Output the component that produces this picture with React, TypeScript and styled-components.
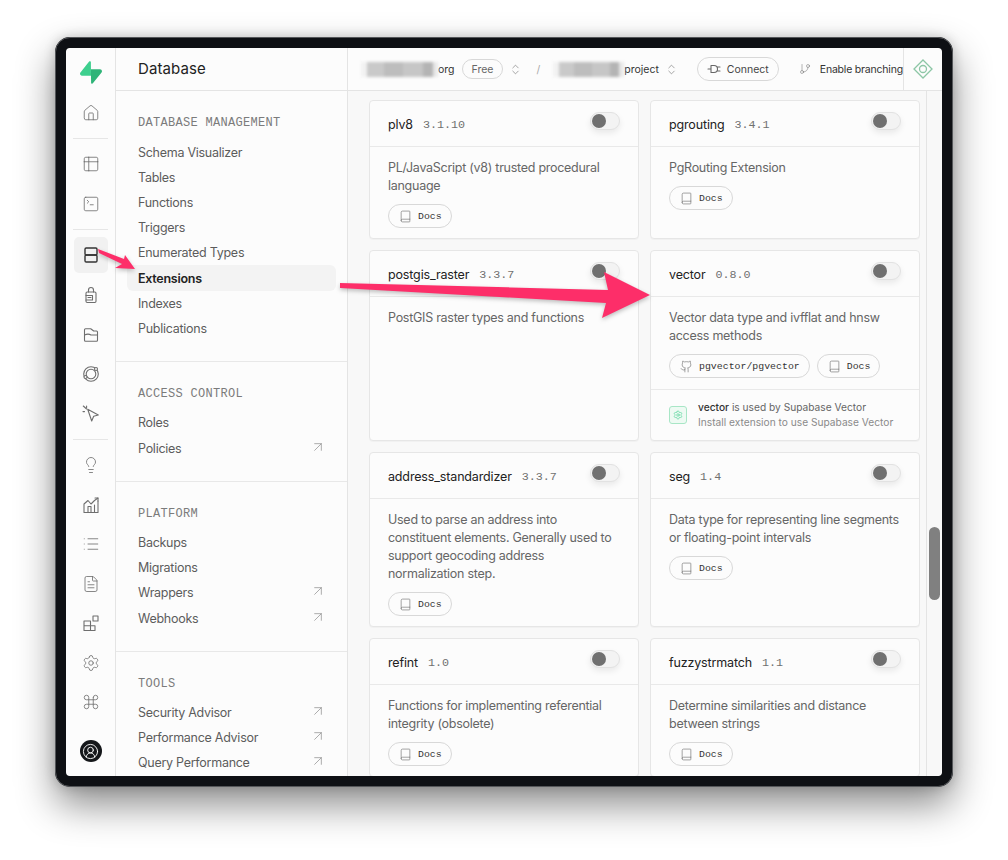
import React from 'react'
import styled, { createGlobalStyle } from 'styled-components'
import {
  ArrowUpRight, Book, ChevronsUpDown, CircleUserRound, Command, FileText, Github, GitBranch,
  Home, Lightbulb, List, Settings, SquareTerminal, Table2,
} from 'lucide-react'

const Global = createGlobalStyle`
  html, body { margin: 0; padding: 0; background: #fff; }
  body { font-family: Inter, "Liberation Sans", sans-serif; }
  * { box-sizing: border-box; }
`

const Page = styled.div`
  position: relative;
  width: 1008px;
  height: 860px;
  padding: 37px 55px 0;
  overflow: hidden;
`

const Frame = styled.div`
  width: 898px;
  height: 750px;
  border: 11px solid #0e1014;
  border-radius: 15px;
  outline: 1px solid #55575a;
  outline-offset: -1px;
  box-shadow: 0 18px 38px rgba(0, 0, 0, 0.45), 0 0 12px rgba(0, 0, 0, 0.18);
`

const Screen = styled.div`
  display: flex;
  width: 100%;
  height: 100%;
  background: #fcfcfc;
  border-radius: 6px;
  overflow: hidden;
`

const Rail = styled.nav`
  flex: 0 0 50px;
  display: flex;
  flex-direction: column;
  align-items: center;
  padding-top: 4px;
  border-right: 1px solid #e4e4e4;
`

const Logo = styled.div`
  height: 40px;
  display: flex;
  align-items: center;
  justify-content: center;
  margin-bottom: 1px;
`

const RailIcon = styled.div<{ $active?: boolean }>`
  width: 34px;
  height: ${p => (p.$active ? '36px' : '39.5px')};
  margin: ${p => (p.$active ? '1px 0 3px' : '0')};
  display: flex;
  align-items: center;
  justify-content: center;
  color: #6e6e6e;
  border-radius: 5px;
  background: ${p => (p.$active ? '#f1f1f1' : 'transparent')};
`

const RailSep = styled.div`
  width: 35px;
  height: 1px;
  margin: 5px 0 6px;
  background: #e6e6e6;
`

const Avatar = styled.div`
  width: 22px;
  height: 22px;
  margin-top: 18px;
  border-radius: 50%;
  background: #15171a;
  color: #fff;
  display: flex;
  align-items: center;
  justify-content: center;
`

const Sidebar = styled.aside`
  flex: 0 0 232px;
  border-right: 1px solid #e4e4e4;
  overflow: hidden;
`

const SideTitle = styled.div`
  height: 43px;
  display: flex;
  align-items: center;
  padding: 0 0 2px 22px;
  font-size: 15px;
  letter-spacing: 0.1px;
  color: #222;
  border-bottom: 1px solid #e4e4e4;
`

const SectionLabel = styled.div`
  padding-left: 22px;
  margin-bottom: 8px;
  font-family: "Liberation Mono", monospace;
  font-size: 12px;
  line-height: 16px;
  letter-spacing: 0.3px;
  color: #7b7b7b;
`

const Section = styled.section`
  padding: 24px 0 20px;
  border-bottom: 1px solid #e8e8e8;
  &:last-child { border-bottom: 0; }
  &:first-of-type ${SectionLabel} { margin-bottom: 9px; }
`

const NavRow = styled.div<{ $active?: boolean; $nudge?: boolean }>`
  display: flex;
  align-items: center;
  justify-content: space-between;
  height: ${p => (p.$active ? '26px' : '25px')};
  margin: ${p => (p.$nudge ? '1px' : '0')} 11px 0;
  padding: 0 10px 0 11px;
  font-size: 12.5px;
  letter-spacing: -0.27px;
  font-weight: ${p => (p.$active ? 600 : 400)};
  color: ${p => (p.$active ? '#222' : '#5c5c5c')};
  border-radius: 6px;
  background: ${p => (p.$active ? '#f3f3f3' : 'transparent')};
  svg { color: #8f8f8f; margin-top: -4px; }
`

const Main = styled.main`
  flex: 1;
  min-width: 0;
  display: flex;
  flex-direction: column;
`

const TopBar = styled.header`
  flex: 0 0 43px;
  display: flex;
  align-items: center;
  padding-left: 13px;
  border-bottom: 1px solid #e4e4e4;
  font-size: 10.5px;
  color: #333;
  white-space: nowrap;
`

const Redacted = styled.div<{ $w: number }>`
  width: ${p => p.$w}px;
  height: 15px;
  filter: blur(1.6px);
  background: linear-gradient(90deg, #f2f2f2 0 8%, #c9c9c9 8% 30%, #bdbdbd 30% 55%, #c6c6c6 55% 80%, #b4b4b4 80% 93%, #e8e8e8 93%);
`

const Pill = styled.span`
  display: inline-flex;
  align-items: center;
  gap: 6px;
  height: 24px;
  padding: 0 9px 0 10px;
  border: 1px solid #d8d8d8;
  border-radius: 13px;
  color: #444;
  background: #fcfcfc;
  svg { flex: none; color: #666; }
`

const FreePill = styled(Pill)`
  height: 20px;
  margin: 0 6px 0 7px;
  padding: 0 9px;
  color: #666;
`

const ConnectPill = styled(Pill)`
  margin-left: 19px;
  padding: 0 9px;
`

const Slash = styled.span`
  margin: 0 13px 0 14px;
  color: #aaa;
`

const Chevrons = styled(ChevronsUpDown)<{ $left?: number }>`
  flex: none;
  margin-left: ${p => p.$left ?? 0}px;
  color: #777;
`

const Branch = styled.span`
  display: flex;
  align-items: center;
  gap: 9px;
  margin-left: 20px;
  flex: 1;
  min-width: 0;
  letter-spacing: -0.2px;
  svg { flex: none; color: #777; }
`

const DiamondBox = styled.div`
  flex: 0 0 39px;
  height: 100%;
  display: flex;
  align-items: center;
  justify-content: center;
  border-left: 1px solid #e4e4e4;
`

const Body = styled.div`
  flex: 1;
  min-height: 0;
  display: flex;
  background: #f8f8f8;
`

const Content = styled.div`
  flex: 1;
  overflow: hidden;
  padding: 9px 0 0 21px;
`

const Grid = styled.div`
  display: grid;
  grid-template-columns: 270px 270px;
  gap: 11px;
`

const Card = styled.article`
  display: flex;
  flex-direction: column;
  background: #fcfcfc;
  border: 1px solid #e6e6e6;
  border-radius: 4px;
  box-shadow: 0 1px 1px rgba(0, 0, 0, 0.03);
`

const CardHead = styled.div`
  height: 46px;
  flex: none;
  display: flex;
  align-items: center;
  padding: 2px 18px 0;
  border-bottom: 1px solid #e9e9e9;
`

const Name = styled.span`
  font-size: 12.5px;
  letter-spacing: -0.15px;
  color: #222;
`

const Version = styled.span`
  margin-left: 10px;
  font-family: "Liberation Mono", monospace;
  font-size: 11.7px;
  color: #707070;
`

const Toggle = styled.span`
  margin: -8px 0 0 auto;
  width: 30px;
  height: 18px;
  padding: 1px;
  border: 1px solid #e2e2e2;
  border-radius: 9px;
  background: #f3f3f3;
  box-shadow: 0 3px 6px rgba(0, 0, 0, 0.08);
  &::before {
    content: '';
    display: block;
    width: 14px;
    height: 14px;
    border-radius: 50%;
    background: #707070;
  }
`

const CardBody = styled.div`
  flex: 1;
  padding: 12px 18px 10px;
`

const Desc = styled.p`
  margin: 0 0 9px;
  font-size: 12.5px;
  letter-spacing: -0.27px;
  line-height: 18px;
  color: #666;
`

const Links = styled.div`
  display: flex;
  gap: 7px;
`

const LinkPill = styled(Pill)`
  font-family: "Liberation Mono", monospace;
  font-size: 9.9px;
  color: #333;
`

const Notice = styled.div`
  height: 51px;
  flex: none;
  display: flex;
  align-items: center;
  gap: 11px;
  margin-top: 1px;
  padding: 0 18px;
  border-top: 1px solid #e9e9e9;
`

const NoticeIcon = styled.div`
  width: 18px;
  height: 18px;
  flex: none;
  display: flex;
  align-items: center;
  justify-content: center;
  border: 1px solid #a8e6c6;
  border-radius: 3px;
  background: #eefaf3;
  color: #3ecf8e;
`

const NoticeText = styled.div`
  font-size: 10.2px;
  line-height: 15px;
  color: #8a8a8a;
  white-space: nowrap;
  b { font-weight: 500; color: #333; }
  em { font-style: normal; color: #666; }
`

const Gutter = styled.div`
  flex: 0 0 16px;
  padding: 436px 2px 0 2px;
  border-left: 1px solid #e4e4e4;
`

const Thumb = styled.div`
  width: 11px;
  height: 73px;
  border-radius: 6px;
  background: #808080;
`

const Annotations = styled.svg`
  position: absolute;
  inset: 0;
  width: 1008px;
  height: 860px;
  pointer-events: none;
  filter: drop-shadow(0 2px 2px rgba(0, 0, 0, 0.25));
`

const sections = [
  {
    label: 'DATABASE MANAGEMENT',
    items: [
      { name: 'Schema Visualizer' },
      { name: 'Tables' },
      { name: 'Functions' },
      { name: 'Triggers' },
      { name: 'Enumerated Types' },
      { name: 'Extensions', active: true },
      { name: 'Indexes' },
      { name: 'Publications' },
    ],
  },
  {
    label: 'ACCESS CONTROL',
    items: [{ name: 'Roles' }, { name: 'Policies', ext: true, nudge: true }],
  },
  {
    label: 'PLATFORM',
    items: [
      { name: 'Backups' },
      { name: 'Migrations' },
      { name: 'Wrappers', ext: true },
      { name: 'Webhooks', ext: true, nudge: true },
    ],
  },
  {
    label: 'TOOLS',
    items: [
      { name: 'Security Advisor', ext: true },
      { name: 'Performance Advisor', ext: true },
      { name: 'Query Performance', ext: true },
    ],
  },
]

const cards = [
  { name: 'plv8', version: '3.1.10', desc: 'PL/JavaScript (v8) trusted procedural language' },
  { name: 'pgrouting', version: '3.4.1', desc: 'PgRouting Extension' },
  { name: 'postgis_raster', version: '3.3.7', desc: 'PostGIS raster types and functions', noDocs: true },
  { name: 'vector', version: '0.8.0', desc: 'Vector data type and ivfflat and hnsw access methods', repo: 'pgvector/pgvector', notice: true },
  { name: 'address_standardizer', version: '3.3.7', desc: 'Used to parse an address into constituent elements. Generally used to support geocoding address normalization step.' },
  { name: 'seg', version: '1.4', desc: 'Data type for representing line segments or floating-point intervals' },
  { name: 'refint', version: '1.0', desc: 'Functions for implementing referential integrity (obsolete)' },
  { name: 'fuzzystrmatch', version: '1.1', desc: 'Determine similarities and distance between strings' },
]

const stroke = { fill: 'none', stroke: 'currentColor', strokeWidth: 1.1, strokeLinecap: 'round' as const, strokeLinejoin: 'round' as const }

const SupabaseLogo = () => (
  <svg width="22" height="23" viewBox="0 0 109 113">
    <path d="M63.7 110.3c-2.9 3.6-8.7 1.6-8.7-3L54 40.1h45.2c8.2 0 12.8 9.5 7.7 15.9z" fill="#2fb478" />
    <path d="M45.3 2.1c2.9-3.6 8.7-1.6 8.7 3l.5 67.2H9.8c-8.2 0-12.7-9.5-7.6-15.9z" fill="#3ecf8e" />
  </svg>
)

const DatabaseIcon = () => (
  <svg width="18" height="18" viewBox="0 0 18 18" {...stroke} strokeWidth={1.4} color="#333">
    <rect x="3" y="2" width="12" height="7" rx="1.2" />
    <rect x="3" y="9" width="12" height="7" rx="1.2" />
  </svg>
)

const AuthIcon = () => (
  <svg width="18" height="18" viewBox="0 0 18 18" {...stroke}>
    <path d="M6.5 6V4a2.5 2.5 0 0 1 5 0v2" />
    <rect x="4" y="6" width="10" height="10.5" rx="1.2" />
    <path d="M4 9.5h6.5v4.5H4M6 11.5h3" />
  </svg>
)

const StorageIcon = () => (
  <svg width="18" height="18" viewBox="0 0 18 18" {...stroke}>
    <path d="M2.5 9V3.8c0-.6.5-1 1-1h5.2l3 2.2h2.8c.6 0 1 .4 1 1V9" />
    <path d="M2.5 9c3-1.5 5-1 6.5 0h6.5v5.2c0 .6-.4 1-1 1h-11c-.6 0-1-.4-1-1z" />
  </svg>
)

const RealtimeIcon = () => (
  <svg width="18" height="18" viewBox="0 0 18 18" {...stroke}>
    <circle cx="9" cy="9" r="7.3" />
    <circle cx="9" cy="9" r="4.8" />
    <circle cx="14" cy="4" r="1.5" fill="#fcfcfc" />
    <circle cx="3.5" cy="12" r="1.5" fill="#fcfcfc" />
  </svg>
)

const CursorIcon = () => (
  <svg width="18" height="18" viewBox="0 0 18 18" {...stroke}>
    <path d="M5.7 4.3 16.3 10l-4.6 1.3L9.7 16z" />
    <path d="M1.3 1l3.3 3M4.6 1v1.5M1 6.600h1.500" />
  </svg>
)

const ReportsIcon = () => (
  <svg width="18" height="18" viewBox="0 0 18 18" {...stroke}>
    <path d="M2 16.5V8l4-3.5 3 3.5 3.5-3.5L16 2M16 5v11.500M2 16.500h14" />
    <path d="M6 16.500v-6h3v6M12.500 16.500V9" />
    <path d="M13 2h3v3" />
  </svg>
)

const BlocksIcon = () => (
  <svg width="18" height="18" viewBox="0 0 18 18" {...stroke}>
    <path d="M2 7h6.500v9.500H2zM2 11.700h11V16.500H8.500" />
    <rect x="11" y="2" width="5" height="5" />
  </svg>
)

const PlugIcon = () => (
  <svg width="14" height="14" viewBox="0 0 14 14" {...stroke}>
    <path d="M1 7h3M4 3.500h3a3.500 3.500 0 0 1 0 7H4zM10.500 5H13M10.500 9H13" />
  </svg>
)

const Diamond = () => (
  <svg width="20" height="20" viewBox="0 0 20 20" fill="none" stroke="#8cc6a5" strokeWidth="1.3">
    <path d="M10 1l9 9-9 9-9-9z" />
    <circle cx="10" cy="10" r="3.5" />
  </svg>
)

function ExtensionCard({ card }: { card: (typeof cards)[number] }) {
  return (
    <Card>
      <CardHead>
        <Name>{card.name}</Name>
        <Version>{card.version}</Version>
        <Toggle />
      </CardHead>
      <CardBody>
        <Desc>{card.desc}</Desc>
        {!card.noDocs && (
          <Links>
            {card.repo && <LinkPill><Github size={13} strokeWidth={1.1} />{card.repo}</LinkPill>}
            <LinkPill><Book size={13} strokeWidth={1.1} />Docs</LinkPill>
          </Links>
        )}
      </CardBody>
      {card.notice && (
        <Notice>
          <NoticeIcon><Settings size={10} strokeWidth={1.4} /></NoticeIcon>
          <NoticeText>
            <b>vector</b> <em>is used by Supabase Vector</em>
            <br />
            Install extension to use Supabase Vector
          </NoticeText>
        </Notice>
      )}
    </Card>
  )
}

export default function App() {
  return (
    <Page>
      <Global />
      <Frame>
        <Screen>
          <Rail>
            <Logo><SupabaseLogo /></Logo>
            <RailIcon><Home size={18} strokeWidth={1.1} /></RailIcon>
            <RailSep />
            <RailIcon><Table2 size={18} strokeWidth={1.1} /></RailIcon>
            <RailIcon><SquareTerminal size={18} strokeWidth={1.1} /></RailIcon>
            <RailSep />
            <RailIcon $active><DatabaseIcon /></RailIcon>
            <RailIcon><AuthIcon /></RailIcon>
            <RailIcon><StorageIcon /></RailIcon>
            <RailIcon><RealtimeIcon /></RailIcon>
            <RailIcon><CursorIcon /></RailIcon>
            <RailSep />
            <RailIcon><Lightbulb size={18} strokeWidth={1.1} /></RailIcon>
            <RailIcon><ReportsIcon /></RailIcon>
            <RailIcon><List size={18} strokeWidth={1.1} /></RailIcon>
            <RailIcon><FileText size={18} strokeWidth={1.1} /></RailIcon>
            <RailIcon><BlocksIcon /></RailIcon>
            <RailIcon><Settings size={18} strokeWidth={1.1} /></RailIcon>
            <RailIcon><Command size={18} strokeWidth={1.1} /></RailIcon>
            <Avatar><CircleUserRound size={17} strokeWidth={1.3} /></Avatar>
          </Rail>

          <Sidebar>
            <SideTitle>Database</SideTitle>
            {sections.map(section => (
              <Section key={section.label}>
                <SectionLabel>{section.label}</SectionLabel>
                {section.items.map((item: { name: string; active?: boolean; nudge?: boolean; ext?: boolean }) => (
                  <NavRow key={item.name} $active={item.active} $nudge={item.nudge}>
                    {item.name}
                    {item.ext && <ArrowUpRight size={16} strokeWidth={1.1} />}
                  </NavRow>
                ))}
              </Section>
            ))}
          </Sidebar>

          <Main>
            <TopBar>
              <Redacted $w={77} />
              org
              <FreePill>Free</FreePill>
              <Chevrons size={13} strokeWidth={1.2} />
              <Slash>/</Slash>
              <Redacted $w={71} />
              project
              <Chevrons size={13} strokeWidth={1.2} $left={6} />
              <ConnectPill><PlugIcon />Connect</ConnectPill>
              <Branch><GitBranch size={12} strokeWidth={1.1} />Enable branching</Branch>
              <DiamondBox><Diamond /></DiamondBox>
            </TopBar>
            <Body>
              <Content>
                <Grid>
                  {cards.map(card => <ExtensionCard key={card.name} card={card} />)}
                </Grid>
              </Content>
              <Gutter><Thumb /></Gutter>
            </Body>
          </Main>
        </Screen>
      </Frame>

      <Annotations viewBox="0 0 1008 860">
        <polygon points="98,249 99,253 122,264 115,268 135,269 125,255 124,259" fill="#fd2e69" />
        <polygon points="340,283 608,290 604,272 650,295 602,318 606,303 340,288" fill="#fd2e69" />
      </Annotations>
    </Page>
  )
}
